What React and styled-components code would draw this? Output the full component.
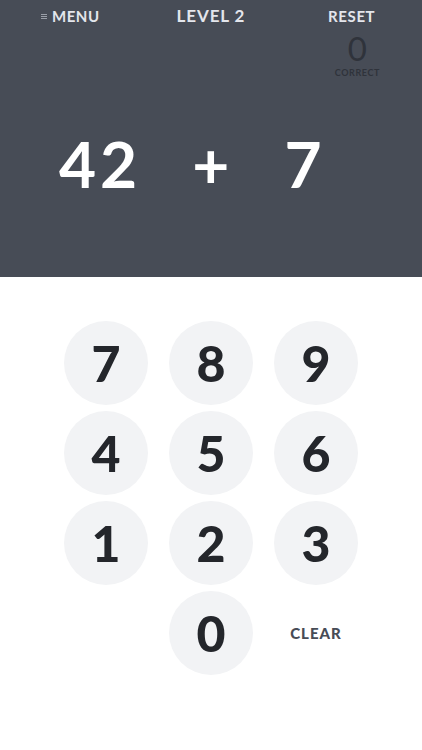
import styled, { createGlobalStyle } from "styled-components"

const GlobalStyle = createGlobalStyle`
    html, body {
        margin: 0;
        padding: 0;
        background: #fff;
    }
    body {
        font-family: Lato, "Liberation Sans", sans-serif;
    }
`;

const Screen = styled.div`
    width: 422px;
    height: 750px;
    display: flex;
    flex-direction: column;
`;
const Header = styled.div`
    height: 277px;
    background-color: #474c56;
    display: flex;
    flex-direction: column;
    box-sizing: border-box;
`;
const TopBar = styled.div`
    display: grid;
    grid-template-columns: 1fr 1fr 1fr;
    align-items: center;
    height: 31px;
`;
const NavItem = styled.div`
    display: flex;
    align-items: center;
    justify-content: center;
    gap: 5px;
    color: #e4e6ec;
    font-weight: 700;
    font-size: ${(p) => (p.$big ? "17px" : "15px")};
    letter-spacing: ${(p) => (p.$big ? "0.9px" : "0.6px")};
`;
const MenuIcon = styled.span`
    display: flex;
    flex-direction: column;
    gap: 1px;
    margin-top: 2px;
    & > i {
        display: block;
        width: 6px;
        height: 1px;
        background: #9a9fa8;
    }
`;
const ScoreRow = styled.div`
    display: flex;
    justify-content: flex-end;
    padding-right: 42px;
    margin-top: 1px;
`;
const Score = styled.div`
    display: flex;
    flex-direction: column;
    align-items: center;
    color: #2f333b;
    font-weight: 700;
`;
const ScoreValue = styled.div`
    font-size: 33px;
    line-height: 32px;
    font-weight: 400;
`;
const ScoreLabel = styled.div`
    font-size: 9px;
    letter-spacing: 0.6px;
    margin-top: 3px;
`;
const Equation = styled.div`
    display: flex;
    align-items: center;
    gap: 51px;
    padding-left: 59px;
    margin-top: 54px;
    color: #fff;
    font-weight: 700;
    font-size: 64px;
    line-height: 64px;
    letter-spacing: 4px;
`;
const Pad = styled.div`
    display: grid;
    grid-template-columns: repeat(3, 84px);
    grid-auto-rows: 84px;
    column-gap: 21px;
    row-gap: 6px;
    justify-content: center;
    padding-top: 44px;
`;
const Key = styled.button`
    border: none;
    border-radius: 50%;
    background-color: #f2f3f5;
    color: #24262b;
    font-family: inherit;
    font-weight: 900;
    font-size: 50px;
    display: flex;
    align-items: center;
    justify-content: center;
    padding: 0;
    cursor: pointer;
    grid-column: ${(p) => p.$col || "auto"};
`;
const Clear = styled.button`
    border: none;
    background: transparent;
    color: #474c56;
    font-family: inherit;
    font-weight: 900;
    font-size: 15px;
    letter-spacing: 1px;
    cursor: pointer;
    padding: 0;
`;

const digits = ["7", "8", "9", "4", "5", "6", "1", "2", "3"];

export default function App() {
    return (
        <Screen>
            <GlobalStyle />
            <Header>
                <TopBar>
                    <NavItem>
                        <MenuIcon><i /><i /><i /></MenuIcon>
                        MENU
                    </NavItem>
                    <NavItem $big>LEVEL 2</NavItem>
                    <NavItem>RESET</NavItem>
                </TopBar>
                <ScoreRow>
                    <Score>
                        <ScoreValue>0</ScoreValue>
                        <ScoreLabel>CORRECT</ScoreLabel>
                    </Score>
                </ScoreRow>
                <Equation>
                    <span>42</span>
                    <span>+</span>
                    <span>7</span>
                </Equation>
            </Header>
            <Pad>
                {digits.map((d) => (
                    <Key key={d}>{d}</Key>
                ))}
                <Key $col="2">0</Key>
                <Clear>CLEAR</Clear>
            </Pad>
        </Screen>
    )
}
